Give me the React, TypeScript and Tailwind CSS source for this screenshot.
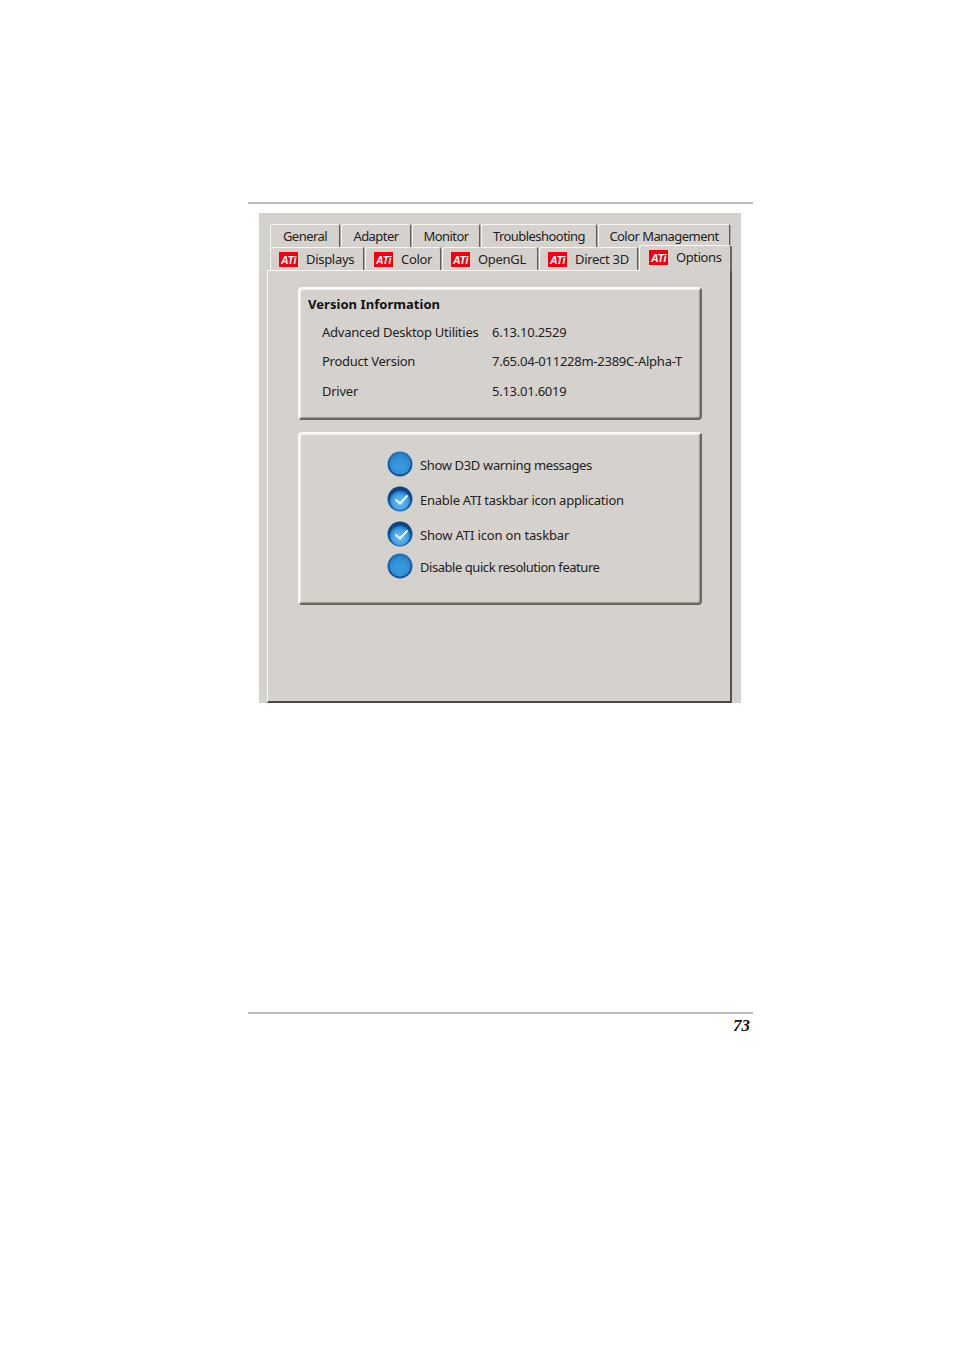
import React from "react";

const UI_FONT = "font-['Noto_Sans',Arial,sans-serif]";
const LABEL = "text-[13px] leading-none text-[#222]";

function AtiLogo() {
  return (
    <svg width="19" height="15" viewBox="0 0 19 15" className="shrink-0">
      <rect width="19" height="15" fill="#f2000f" />
      <text x="2" y="11.5" textLength="15" lengthAdjust="spacingAndGlyphs" fontFamily="'Liberation Sans', Arial, sans-serif" fontSize="11" fontWeight="700" fontStyle="italic" fill="#fff">
        ATi
      </text>
    </svg>
  );
}

function Radio(props: { id: string; checked?: boolean }) {
  const { id, checked } = props;
  return (
    <svg width="26" height="26" viewBox="0 0 26 26" className="shrink-0">
      <defs>
        <linearGradient id={`${id}-ring`} x1="0" y1="0" x2="0" y2="1">
          <stop offset="0%" stopColor={checked ? "#0c3f7d" : "#2a6fb5"} />
          <stop offset="100%" stopColor={checked ? "#1763ac" : "#10508f"} />
        </linearGradient>
        <radialGradient id={id} cx="50%" cy="60%" r="58%">
          <stop offset="0%" stopColor={checked ? "#72c0f4" : "#3c9be0"} />
          <stop offset="70%" stopColor={checked ? "#3f9de4" : "#2f90d8"} />
          <stop offset="100%" stopColor={checked ? "#1c6fbb" : "#2380cb"} />
        </radialGradient>
      </defs>
      <circle cx="13" cy="13" r="12.5" fill={`url(#${id}-ring)`} />
      <circle cx="13" cy={checked ? 14.5 : 13} r={checked ? 10 : 10.5} fill={`url(#${id})`} />
      {checked ? (
        <path d="M9 14 L13 17.5 L20 10" fill="none" stroke="#eafaff" strokeWidth="2" strokeLinecap="round" strokeLinejoin="round" />
      ) : null}
    </svg>
  );
}

function Tab(props: { label: string; width: string; ati?: boolean }) {
  return (
    <div
      className={`flex h-full items-center rounded-t-[3px] border-t border-r border-l border-t-[#f7f6f3] border-r-[#5f5d58] border-l-[#f7f6f3] shadow-[1px_0_0_#a9a69f] ${props.width} ${
        props.ati ? "gap-2 pl-2 tracking-[-0.3px]" : "justify-center tracking-[-0.55px]"
      }`}
    >
      {props.ati ? <AtiLogo /> : null}
      <span className={LABEL}>{props.label}</span>
    </div>
  );
}

function GroupBox(props: { className: string; children: React.ReactNode }) {
  return (
    <div
      className={`w-[404px] rounded-[4px] border-2 border-t-[#fbfaf8] border-r-[#6a675e] border-b-[#6a675e] border-l-[#fbfaf8] shadow-[inset_1px_1px_1px_#efeee9,inset_-1px_-1px_1px_#9d9a90] ${props.className}`}
    >
      {props.children}
    </div>
  );
}

const versions = [
  { label: "Advanced Desktop Utilities", value: "6.13.10.2529", height: "h-[29px]" },
  { label: "Product Version", value: "7.65.04-011228m-2389C-Alpha-T", height: "h-[30px]" },
  { label: "Driver", value: "5.13.01.6019", height: "h-[29px]" },
];

const options = [
  { id: "r1", label: "Show D3D warning messages", checked: false, height: "h-[35px]", spacing: "tracking-[-0.35px]" },
  { id: "r2", label: "Enable ATI taskbar icon application", checked: true, height: "h-[35px]", spacing: "tracking-[-0.25px]" },
  { id: "r3", label: "Show ATI icon on taskbar", checked: true, height: "h-[35px]", spacing: "tracking-[-0.15px]" },
  { id: "r4", label: "Disable quick resolution feature", checked: false, height: "h-[30px]", spacing: "tracking-[-0.45px]" },
];

export default function App() {
  return (
    <div className={`h-[1351px] w-[954px] bg-white px-[248px] pt-[202px] ${UI_FONT}`}>
      <div className="h-[2px] w-[505px] bg-[#bcbcbc]" />

      <div className="mt-[9px] ml-[11px] h-[490px] w-[482px] bg-[#d5d2cd] pt-[11px]">
        <div className="ml-[11px] flex h-[23px] gap-px">
          <Tab label="General" width="w-[70px]" />
          <Tab label="Adapter" width="w-[70px]" />
          <Tab label="Monitor" width="w-[68px]" />
          <Tab label="Troubleshooting" width="w-[116px]" />
          <Tab label="Color Management" width="w-[132px]" />
        </div>
        <div className="ml-[11px] flex h-[23px] items-end gap-px">
          <Tab label="Displays" width="w-[94px]" ati />
          <Tab label="Color" width="w-[76px]" ati />
          <Tab label="OpenGL" width="w-[96px]" ati />
          <Tab label="Direct 3D" width="w-[99px]" ati />
          <div className="relative z-10 -mb-px flex h-[26px] w-[93px] items-center gap-[8px] rounded-t-[3px] border-t border-r-2 border-l border-t-[#f7f6f3] border-r-[#6a6863] border-l-[#f7f6f3] bg-[#d5d2cd] pb-[3px] pl-[9px] tracking-[-0.4px]">
            <AtiLogo />
            <span className={LABEL}>Options</span>
          </div>
        </div>

        <div className="ml-[8px] h-[433px] w-[465px] border-t border-r-2 border-b-2 border-l border-t-[#f7f6f3] border-r-[#55534f] border-b-[#4a4946] border-l-[#f7f6f3] pt-[16px] pl-[30px]">
          <GroupBox className="h-[133px] pt-[2px] text-[13px] tracking-[-0.25px] text-[#222]">
            <div className="flex h-[27px] items-center pl-[8px] text-[13px] font-bold tracking-[0.05px] text-[#111]">Version Information</div>
            {versions.map((row) => (
              <div key={row.label} className={`flex items-center pl-[22px] ${row.height}`}>
                <span className="w-[170px]">{row.label}</span>
                <span>{row.value}</span>
              </div>
            ))}
          </GroupBox>

          <GroupBox className="mt-[12px] h-[173px] pt-[12px] pl-[87px] text-[13px] text-[#222]">
            {options.map((row) => (
              <div key={row.id} className={`flex items-center gap-[7px] ${row.height}`}>
                <Radio id={row.id} checked={row.checked} />
                <span className={`pt-[4px] ${row.spacing}`}>{row.label}</span>
              </div>
            ))}
          </GroupBox>
        </div>
      </div>

      <div className="mt-[309px] h-[2px] w-[505px] bg-[#bcbcbc]" />
      <div className="mt-[2px] w-[502px] text-right font-['Liberation_Serif','Times_New_Roman',serif] text-[17px] leading-[20px] font-bold text-[#111] italic">
        73
      </div>
    </div>
  );
}
